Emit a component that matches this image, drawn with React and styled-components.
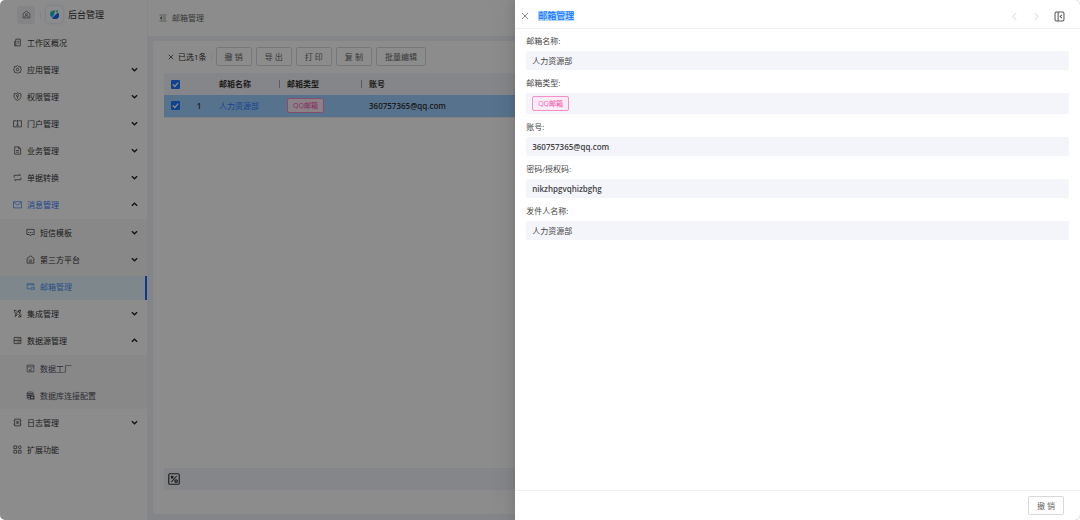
import React from "react";
import styled, { createGlobalStyle, css } from "styled-components";

const GlobalStyle = createGlobalStyle`
  * {
    box-sizing: border-box;
  }
  body {
    margin: 0;
    background-color: white;
    color: #444;
    font-family: "Open Sans", "Noto Sans CJK SC", sans-serif;
    font-size: 8px;
    line-height: 12px;
  }
  button {
    font-family: inherit;
    font-size: inherit;
    line-height: inherit;
    color: inherit;
  }
`;

const Page = styled.div`
  position: relative;
  display: flex;
  min-height: 100vh;
  border-radius: 5px;
  overflow: hidden;
  background-color: #f0f2f7;
`;

const Sidebar = styled.nav`
  flex: 0 0 147px;
  background-color: white;
`;

const Brand = styled.div`
  display: flex;
  align-items: center;
  height: 29px;
  padding-left: 17px;
  gap: 5px;
`;

const HomeButton = styled.button`
  display: flex;
  align-items: center;
  justify-content: center;
  width: 18px;
  height: 18px;
  padding: 0;
  border: none;
  border-radius: 3px;
  background-color: #f0f1f5;
  color: #555;
`;

const BrandLine = styled.span`
  width: 1px;
  height: 8px;
  background-color: #f0f0f0;
`;

const Logo = styled.span`
  display: flex;
  align-items: center;
  justify-content: center;
  width: 17px;
  height: 17px;
  border-radius: 4px;
  background-color: white;
  box-shadow: 0 0 3px rgba(60, 110, 220, 0.3);
`;

const BrandName = styled.span`
  font-size: 9px;
  color: #333;
`;

const Menu = styled.ul`
  list-style: none;
  margin: 0;
  padding: 0;
`;

const SubMenu = styled(Menu)`
  margin-top: 1px;
  background-color: #f7f7f7;
`;

const MenuButton = styled.button`
  display: flex;
  align-items: center;
  gap: 5px;
  width: 100%;
  height: 27px;
  padding: 0 9px 0 ${(props) => (props.$sub ? "26px" : "13px")};
  border: none;
  background-color: transparent;
  color: ${(props) => (props.$open ? "#2f7cff" : props.$light ? "#555566" : "#333")};
  font-weight: 400;
  text-align: left;
  ${(props) =>
    props.$active &&
    css`
      height: 24px;
      margin-top: 3px;
      padding-bottom: 3px;
      border-right: 2px solid #1668ff;
      background-color: #e6f7ff;
      color: #4a90f5;
    `}
`;

const MenuText = styled.span`
  flex: 1;
`;

const Main = styled.main`
  flex: 1;
  min-width: 0;
  display: flex;
  flex-direction: column;
  gap: 5px;
  padding-bottom: 6px;
`;

const TopBar = styled.header`
  display: flex;
  align-items: center;
  gap: 5px;
  height: 36px;
  margin-left: 1px;
  padding-left: 11px;
  background-color: white;
  color: #666;
`;

const Card = styled.section`
  flex: 1;
  display: flex;
  flex-direction: column;
  margin: 0 6px;
  padding: 6px 11px 24px;
  border-radius: 3px;
  background-color: white;
`;

const Toolbar = styled.div`
  display: flex;
  align-items: center;
  gap: 4px;
  padding-left: 4px;
  margin-bottom: 7px;
`;

const IconButton = styled.button`
  display: flex;
  padding: 0;
  border: none;
  background-color: transparent;
  color: ${(props) => props.$color || "#333"};
`;

const Picked = styled.span`
  color: #333;
`;

const ToolLine = styled.span`
  width: 1px;
  height: 8px;
  background-color: #eee;
`;

const Button = styled.button`
  height: 19px;
  padding: 0 8px;
  border: 1px solid #d9d9d9;
  border-radius: 2px;
  background-color: white;
  color: #666;
  white-space: nowrap;
`;

const Table = styled.table`
  width: 100%;
  table-layout: fixed;
  border-collapse: collapse;
  text-align: left;
`;

const HeadCell = styled.th`
  height: 22px;
  padding: 0 0 0 7px;
  background-color: #f3f5f9;
  color: #333;
  font-weight: 700;
  width: ${(props) => props.$width || "auto"};
`;

const HeadInner = styled.span`
  display: block;
  line-height: 8px;
  border-right: ${(props) => (props.$line ? "1px solid #aaa" : "none")};
`;

const Cell = styled.td`
  height: 22px;
  padding: 0 0 0 7px;
  border-bottom: 1px solid #eee;
  background-color: #9dd0ff;
  color: #333;
  font-weight: 600;
`;

const IndexCell = styled(Cell)`
  padding: 0;
  text-align: center;
`;

const Checkbox = styled.input`
  appearance: none;
  display: block;
  width: 9px;
  height: 9px;
  margin: 0;
  border-radius: 1px;
  background: #1f7aff
    url("data:image/svg+xml,%3Csvg xmlns='http://www.w3.org/2000/svg' viewBox='0 0 9 9'%3E%3Cpath d='M1.8 4.5 3.8 6.5 7.2 2.6' fill='none' stroke='white' stroke-width='1.2'/%3E%3C/svg%3E");
`;

const NameLink = styled.a`
  color: #2f7cff;
  font-weight: 400;
  text-decoration: none;
`;

const Tag = styled.span`
  display: inline-block;
  height: 15px;
  padding: 0 5px;
  border: 1px solid #f48fc9;
  border-radius: 2px;
  background-color: #fdebf6;
  color: #f062b6;
  font-size: 7px;
  font-weight: 500;
  line-height: 13px;
  vertical-align: middle;
`;

const CardFooter = styled.div`
  display: flex;
  align-items: center;
  height: 22px;
  margin-top: auto;
  padding-left: 4px;
  background-color: #f3f5f9;
`;

const Mask = styled.div`
  position: absolute;
  inset: 0;
  background-color: rgba(0, 0, 0, 0.45);
`;

const Drawer = styled.aside`
  position: absolute;
  top: 0;
  right: 0;
  bottom: 0;
  width: 52.3%;
  display: flex;
  flex-direction: column;
  background-color: white;
  box-shadow: -3px 0 8px rgba(0, 0, 0, 0.08), -6px 0 24px rgba(0, 0, 0, 0.05);
`;

const DrawerHeader = styled.header`
  display: flex;
  align-items: center;
  gap: 9px;
  height: 29px;
  padding: 4px 15px 0 6px;
  border-bottom: 1px solid #f0f0f0;
`;

const DrawerTitle = styled.h2`
  margin: 0;
  background-color: #b3d7ff;
  color: #1677ff;
  font-size: 9px;
  font-weight: 500;
  line-height: 10px;
`;

const DrawerTools = styled.div`
  display: flex;
  align-items: center;
  gap: 13px;
  margin-left: auto;
`;

const Fields = styled.dl`
  flex: 1;
  display: flex;
  flex-direction: column;
  gap: 7px;
  margin: 0;
  padding: 6px 11px;
`;

const Field = styled.div`
  display: flex;
  flex-direction: column;
  gap: 4px;
`;

const FieldValue = styled.dd`
  display: flex;
  align-items: center;
  min-height: 19px;
  margin: 0;
  padding: 3px 6px;
  border-radius: 2px;
  background-color: #f4f5fa;
  font-weight: ${(props) => (props.$bold ? 600 : 400)};
`;

const DrawerFooter = styled.footer`
  display: flex;
  justify-content: flex-end;
  padding: 5px 16px;
  border-top: 1px solid #f0f0f0;
`;

const icons = {
  home: (
    <>
      <path d="M2 6.5 8 2l6 4.5V14H2z" />
      <circle cx="8" cy="8" r="1.6" />
      <path d="M5 13c0-4 6-4 6 0" />
    </>
  ),
  overview: (
    <>
      <path d="M5 2h8v12H3V6h2zM5 6v8" />
      <path d="M8 6h3M8 9h3" />
    </>
  ),
  gear: (
    <>
      <path d="M8 1l2.200 1.800 3.300.2.300 3L15 8l-1.200 2-.3 3-3.300.2L8 15l-2.200-1.800-3.300-.2-.3-3L1 8l1.200-2 .3-3 3.300-.2z" />
      <circle cx="8" cy="8" r="2.300" />
    </>
  ),
  shield: (
    <>
      <path d="M2 3c3 0 4-.5 6-1.500C10 2.500 11 3 14 3v5c0 3-2 5-6 7-4-2-6-4-6-7z" />
      <circle cx="8" cy="6.500" r="1.800" />
      <path d="M8 8v4" />
    </>
  ),
  portal: (
    <>
      <path d="M5 3H1v11h14V3h-4" />
      <path d="M8 11V2M5.500 4.500 8 2l2.500 2.500M5.500 11h5" />
    </>
  ),
  file: (
    <>
      <path d="M3 1.500h7l3.500 3.500v9.500H3zM10 1.500V5h3.500" />
      <path d="M5.500 8h5M5.500 11h5" />
    </>
  ),
  swap: <path d="M2 8V4h11M11 2l2.500 2M14 8v4H3M5 14l-2.500-2" />,
  mail: (
    <>
      <path d="M1 3h14v11H1z" />
      <path d="m1 4 7 5 7-5" />
    </>
  ),
  sms: (
    <>
      <path d="M1.500 2.500h13v9H10l-2 2.500-2-2.500H1.500z" />
      <path d="M4 8h2M7 8h2M10 8h2" />
    </>
  ),
  platform: (
    <>
      <path d="M2 6 8 1.500 14 6v8.500H2z" />
      <path d="M5 9h6M5 12h6" />
    </>
  ),
  mailbox: (
    <>
      <path d="M14 8V3H2v9h6M2 5h12" />
      <path d="M9 10h6v3H9z" />
    </>
  ),
  plug: (
    <>
      <path d="M1.500 2.500h4l1.500 2M14 2.500h-3L4 9.500M3 2.500V6l3 2-2.500 5.500 5-4M9 4l4 3-2.500 3M10 10l4 4M14 9v5H9" />
      <circle cx="11.500" cy="4" r="2" />
    </>
  ),
  database: <path d="M2 2.500h12v11H2zM2 8h12M5 5.300h1M5 10.800h1M8 5.300h4M8 10.800h4" />,
  factory: (
    <>
      <path d="M2 2h12v12H2zM2 5h12" />
      <path d="m5 9 2 2 4-4M5 12h6" />
    </>
  ),
  dbconfig: (
    <>
      <path d="M2 3.500C2 1 13 1 13 3.500V8M2 3.500v9C2 14 5 14.500 7 14.500" />
      <path d="M2 5h11M2 8h8M2 11h5" strokeWidth="2" />
      <path d="M8 9h6v5H8z" strokeWidth="2" />
    </>
  ),
  log: (
    <>
      <path d="M3 2h10v12H3zM1 5h2M1 11h2M13 5h2M13 11h2" />
      <path d="M6 6h4M6 8h4M6 10h4" />
    </>
  ),
  extend: (
    <>
      <path d="M1.500 1.500h5v5h-5zM1.500 9.500h5v5h-5zM9.500 9.500h5v5h-5z" />
      <circle cx="12" cy="4" r="2.500" />
    </>
  ),
  fold: (
    <>
      <path d="M1 2h14M8 6h6M8 10h6M1 14h14" />
      <path d="M5.500 5v6L2 8z" fill="currentColor" />
    </>
  ),
  close: <path d="m2 2 12 12M14 2 2 14" />,
  down: <path d="m2 5 6 6 6-6" />,
  up: <path d="m2 11 6-6 6 6" />,
  prev: <path d="m11 2-6 6 6 6" />,
  next: <path d="m5 2 6 6-6 6" />,
  expand: (
    <>
      <rect x="1.500" y="1.500" width="13" height="13" rx="2" />
      <path d="M6 1.500v13M11.500 5.500 9 8l2.500 2.500" />
    </>
  ),
  ratio: (
    <>
      <rect x="1" y="1" width="14" height="14" rx="1.500" />
      <path d="m11.500 4-7 8M4 4l3 3M7 4 4 7" />
      <circle cx="10.800" cy="10.800" r="1.700" />
    </>
  ),
};

const Icon = ({ name, size = 9, weight = 1.2 }) => (
  <svg
    width={size}
    height={size}
    viewBox="0 0 16 16"
    fill="none"
    stroke="currentColor"
    strokeWidth={weight}
    aria-hidden="true"
  >
    {icons[name]}
  </svg>
);

const menu = [
  { icon: "overview", text: "工作区概况" },
  { icon: "gear", text: "应用管理", arrow: "down" },
  { icon: "shield", text: "权限管理", arrow: "down" },
  { icon: "portal", text: "门户管理", arrow: "down" },
  { icon: "file", text: "业务管理", arrow: "down" },
  { icon: "swap", text: "单据转换", arrow: "down" },
  {
    icon: "mail",
    text: "消息管理",
    arrow: "up",
    open: true,
    items: [
      { icon: "sms", text: "短信模板", arrow: "down" },
      { icon: "platform", text: "第三方平台", arrow: "down" },
      { icon: "mailbox", text: "邮箱管理", active: true },
    ],
  },
  { icon: "plug", text: "集成管理", arrow: "down" },
  {
    icon: "database",
    text: "数据源管理",
    arrow: "up",
    items: [
      { icon: "factory", text: "数据工厂", light: true },
      { icon: "dbconfig", text: "数据库连接配置", light: true },
    ],
  },
  { icon: "log", text: "日志管理", arrow: "down" },
  { icon: "extend", text: "扩展功能" },
];

const Arrow = styled.span`
  display: flex;
  color: #222;
`;

const MenuItem = ({ item, sub }) => (
  <li>
    <MenuButton $sub={sub} $open={item.open} $active={item.active} $light={item.light}>
      <Icon name={item.icon} />
      <MenuText>{item.text}</MenuText>
      {item.arrow && (
        <Arrow>
          <Icon name={item.arrow} size={7} weight={3} />
        </Arrow>
      )}
    </MenuButton>
    {item.items && (
      <SubMenu>
        {item.items.map((child) => (
          <MenuItem key={child.text} item={child} sub />
        ))}
      </SubMenu>
    )}
  </li>
);

const fields = [
  { label: "邮箱名称", value: "人力资源部" },
  { label: "邮箱类型", value: <Tag>QQ邮箱</Tag> },
  { label: "账号", value: "360757365@qq.com", bold: true },
  { label: "密码/授权码", value: "nikzhpgvqhizbghg", bold: true },
  { label: "发件人名称", value: "人力资源部" },
];

const App = () => {
  return (
    <Page>
      <GlobalStyle />
      <Sidebar>
        <Brand>
          <HomeButton aria-label="首页">
            <Icon name="home" />
          </HomeButton>
          <BrandLine />
          <Logo>
            <svg width="9" height="9" viewBox="0 0 18 18" aria-hidden="true">
              <path d="M1 9a8 8 0 0 1 8-8h2L8 8 2 13a8 8 0 0 1-1-4z" fill="#20c5a5" />
              <path d="M2 2l7 7-6 6C0 12 0 5 2 2z" fill="#19b6d8" />
              <path d="M16 5a8 8 0 0 1-12 11z" fill="#1668ff" />
              <path d="M12 1h5l-4 5z" fill="#20c5a5" />
            </svg>
          </Logo>
          <BrandName>后台管理</BrandName>
        </Brand>
        <Menu>
          {menu.map((item) => (
            <MenuItem key={item.text} item={item} />
          ))}
        </Menu>
      </Sidebar>
      <Main>
        <TopBar>
          <Icon name="fold" size={8} />
          <span>邮箱管理</span>
        </TopBar>
        <Card>
          <Toolbar>
            <IconButton aria-label="取消选择">
              <Icon name="close" size={6} weight={2} />
            </IconButton>
            <Picked>已选1条</Picked>
            <ToolLine />
            <Button>撤 销</Button>
            <Button>导 出</Button>
            <Button>打 印</Button>
            <Button>复 制</Button>
            <Button>批量编辑</Button>
          </Toolbar>
          <Table>
            <thead>
              <tr>
                <HeadCell $width="22px">
                  <Checkbox type="checkbox" aria-label="全选" defaultChecked />
                </HeadCell>
                <HeadCell $width="26px" />
                <HeadCell $width="68px">
                  <HeadInner $line>邮箱名称</HeadInner>
                </HeadCell>
                <HeadCell $width="82px">
                  <HeadInner $line>邮箱类型</HeadInner>
                </HeadCell>
                <HeadCell>
                  <HeadInner>账号</HeadInner>
                </HeadCell>
              </tr>
            </thead>
            <tbody>
              <tr>
                <Cell>
                  <Checkbox type="checkbox" aria-label="选择人力资源部" defaultChecked />
                </Cell>
                <IndexCell>1</IndexCell>
                <Cell>
                  <NameLink href="#">人力资源部</NameLink>
                </Cell>
                <Cell>
                  <Tag>QQ邮箱</Tag>
                </Cell>
                <Cell>360757365@qq.com</Cell>
              </tr>
            </tbody>
          </Table>
          <CardFooter>
            <IconButton aria-label="统计">
              <Icon name="ratio" size={12} weight={1.5} />
            </IconButton>
          </CardFooter>
        </Card>
      </Main>
      <Mask />
      <Drawer>
        <DrawerHeader>
          <IconButton aria-label="关闭" $color="#777">
            <Icon name="close" size={8} weight={1.8} />
          </IconButton>
          <DrawerTitle>邮箱管理</DrawerTitle>
          <DrawerTools>
            <IconButton aria-label="上一条" $color="#ccc">
              <Icon name="prev" size={9} weight={1.5} />
            </IconButton>
            <IconButton aria-label="下一条" $color="#ccc">
              <Icon name="next" size={9} weight={1.5} />
            </IconButton>
            <IconButton aria-label="展开" $color="#555">
              <Icon name="expand" size={11} weight={1.5} />
            </IconButton>
          </DrawerTools>
        </DrawerHeader>
        <Fields>
          {fields.map((field) => (
            <Field key={field.label}>
              <dt>{field.label}:</dt>
              <FieldValue $bold={field.bold}>{field.value}</FieldValue>
            </Field>
          ))}
        </Fields>
        <DrawerFooter>
          <Button>撤 销</Button>
        </DrawerFooter>
      </Drawer>
    </Page>
  );
};

export default App;
